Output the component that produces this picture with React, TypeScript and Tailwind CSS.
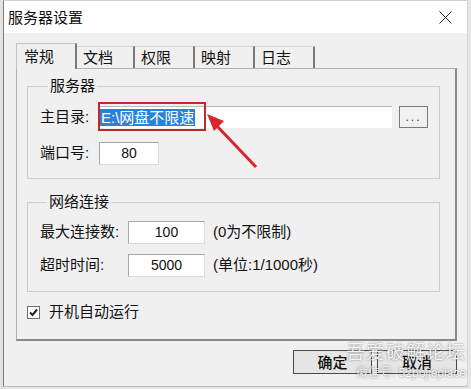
const ui = { fontFamily: '"Liberation Sans", "Noto Sans CJK SC", sans-serif' };

function Tab({ label, active, w }: { label: string; active?: boolean; w: string }) {
  if (active) {
    return (
      <div
        className={`${w} h-[26px] -mb-px relative z-10 bg-[#f0f0f0] border-t border-l border-[#c4c4c4] border-r-2 border-r-[#7a7a7a] flex items-center pl-[7px] text-[15px] leading-none text-[#111]`}
      >
        {label}
      </div>
    );
  }
  return (
    <div
      className={`${w} h-[22px] bg-[#f0f0f0] border-t border-[#d6d6d6] border-r-2 border-r-[#7a7a7a] flex items-center pl-[6px] text-[15px] leading-none text-[#111]`}
    >
      {label}
    </div>
  );
}

function Field({ value, w, h }: { value: string; w: string; h: string }) {
  return (
    <div
      className={`${w} ${h} bg-white border border-[#dadada] border-t-[#a9a9a9] border-l-[#a9a9a9] flex items-center justify-center text-[14px] text-[#111]`}
    >
      {value}
    </div>
  );
}

export default function App() {
  return (
    <div className="relative w-[471px] h-[389px] flex bg-[#e6e6e6] overflow-hidden" style={ui}>
      <div className="w-[3px] h-full bg-[#e2e2e2]" />

      <div className="flex-1 h-[387px] mr-[3px] flex flex-col border-l border-[#7d7d7d] border-t border-t-[#cfcfcf] border-r border-r-[#d4d4d4] border-b border-b-[#bdbdbd]">
        {/* title bar */}
        <div className="h-[32px] bg-white flex items-center pl-[4px]">
          <span className="text-[15px] text-[#111] leading-none">服务器设置</span>
          <svg className="ml-auto mr-[15px]" width="13" height="13" viewBox="0 0 13 13">
            <path d="M0.5 0.5 L12.5 12.5 M12.5 0.5 L0.5 12.5" stroke="#222" strokeWidth="1" />
          </svg>
        </div>

        {/* body */}
        <div className="flex-1 bg-[#f0f0f0] flex flex-col pl-[12px] pt-[10px]">
          <div className="flex items-end h-[25px]">
            <Tab label="常规" active w="w-[61px]" />
            <Tab label="文档" w="w-[58px]" />
            <Tab label="权限" w="w-[60px]" />
            <Tab label="映射" w="w-[60px]" />
            <Tab label="日志" w="w-[60px]" />
          </div>

          <div className="w-[441px] h-[273px] bg-[#f0f0f0] border border-[#b0b0b0] border-r-2 border-b-2 border-r-[#8a8a8a] border-b-[#8a8a8a] flex flex-col pl-[10px] pt-[8px]">
            <fieldset className="w-[413px] h-[102px] border border-[#cdcdcd] pl-[12px] flex flex-col">
              <legend className="ml-[8px] px-[2px] text-[15px] leading-[18px] text-[#111]">服务器</legend>
              <div className="flex items-center mt-[11px]">
                <span className="w-[59px] text-[15px] text-[#111]">主目录:</span>
                <div className="relative">
                  <div className="w-[293px] h-[22px] bg-white border-t border-[#b8b8b8] flex items-center pl-[1px]">
                    <span className="bg-[#2a82d8] text-white text-[15px] leading-[17px] px-[1px]">E:\网盘不限速</span>
                  </div>
                  <div className="absolute -top-[4px] -left-[1px] w-[108px] h-[29px] border-2 border-[#c0282e]" />
                </div>
                <button className="ml-[7px] w-[29px] h-[22px] bg-[#f0f0f0] border border-[#7a7a7a] flex items-center justify-center text-[12px] leading-none text-[#444] tracking-[2px]">
                  ...
                </button>
              </div>
              <div className="flex items-center mt-[13px]">
                <span className="w-[59px] text-[15px] text-[#111]">端口号:</span>
                <Field value="80" w="w-[60px]" h="h-[23px]" />
              </div>
            </fieldset>

            <fieldset className="mt-[14px] w-[413px] h-[99px] border border-[#cdcdcd] pl-[12px] flex flex-col">
              <legend className="ml-[7px] px-[2px] text-[15px] leading-[18px] text-[#111]">网络连接</legend>
              <div className="flex items-center mt-[10px]">
                <span className="w-[88px] text-[15px] text-[#111]">最大连接数:</span>
                <Field value="100" w="w-[77px]" h="h-[23px]" />
                <span className="ml-[8px] text-[15px] text-[#111]">(0为不限制)</span>
              </div>
              <div className="flex items-center mt-[10px]">
                <span className="w-[88px] text-[15px] text-[#111]">超时时间:</span>
                <Field value="5000" w="w-[77px]" h="h-[23px]" />
                <span className="ml-[8px] text-[15px] text-[#111]">(单位:1/1000秒)</span>
              </div>
            </fieldset>

            <div className="mt-[14px] flex items-center h-[13px]">
              <div className="w-[13px] h-[13px] bg-white border border-[#6d6d6d] flex items-center justify-center">
                <svg width="9" height="9" viewBox="0 0 9 9">
                  <path d="M1 4.5 L3.5 7 L8 1.5" stroke="#222" strokeWidth="2" fill="none" />
                </svg>
              </div>
              <span className="ml-[9px] text-[15px] text-[#111]">开机自动运行</span>
            </div>
          </div>

          <div className="w-[441px] mt-[9px] flex justify-end gap-[5px]">
            <button className="w-[79px] h-[24px] bg-[#e5e5e5] border border-[#4a4a4a] text-[15px] font-medium text-[#111] leading-none">
              确定
            </button>
            <button className="w-[80px] h-[24px] bg-[#e5e5e5] border border-[#4a4a4a] text-[15px] font-medium text-[#111] leading-none">
              取消
            </button>
          </div>
        </div>
      </div>

      {/* red annotation arrow */}
      <svg className="absolute left-0 top-0 pointer-events-none" width="471" height="389">
        <line x1="256" y1="167" x2="216" y2="125" stroke="#d7262d" strokeWidth="3" />
        <polygon points="207,114 224,121 214,131" fill="#d7262d" />
      </svg>

      {/* watermark */}
      <div className="absolute left-[346px] top-[341px] flex flex-col items-end pointer-events-none text-white/90 [text-shadow:0_0_2px_rgba(0,0,0,0.55)]">
        <span className="text-[19px] leading-[24px] tracking-[1px]">吾爱破解论坛</span>
        <span className="text-[12px] leading-[16px]">微信号: 52pojieplace</span>
      </div>
    </div>
  );
}
